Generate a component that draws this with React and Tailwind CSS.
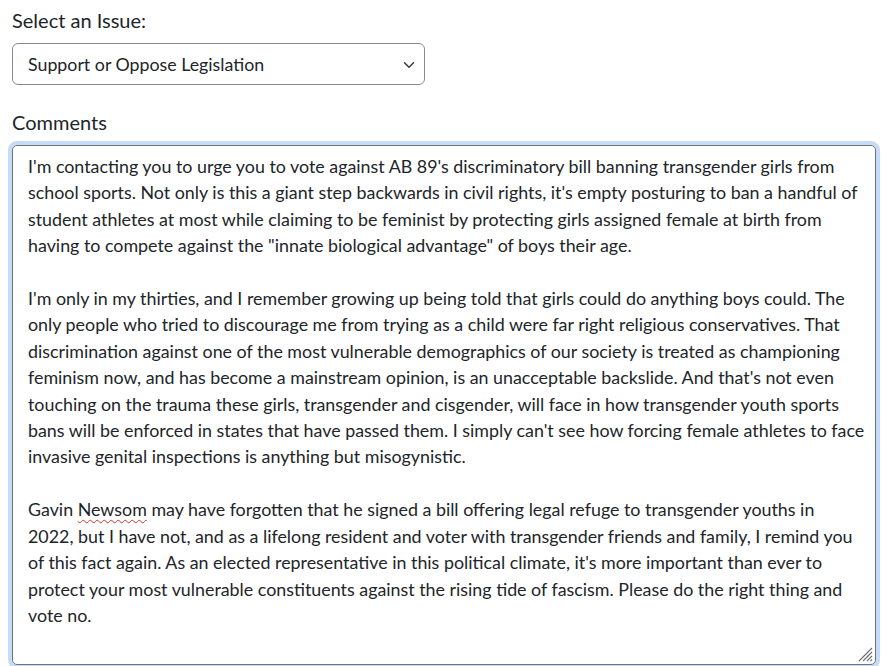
const lines = [
  "I'm contacting you to urge you to vote against AB 89's discriminatory bill banning transgender girls from",
  "school sports. Not only is this a giant step backwards in civil rights, it's empty posturing to ban a handful of",
  "student athletes at most while claiming to be feminist by protecting girls assigned female at birth from",
  'having to compete against the "innate biological advantage" of boys their age.',
  "",
  "I'm only in my thirties, and I remember growing up being told that girls could do anything boys could. The",
  "only people who tried to discourage me from trying as a child were far right religious conservatives. That",
  "discrimination against one of the most vulnerable demographics of our society is treated as championing",
  "feminism now, and has become a mainstream opinion, is an unacceptable backslide. And that's not even",
  "touching on the trauma these girls, transgender and cisgender, will face in how transgender youth sports",
  "bans will be enforced in states that have passed them. I simply can't see how forcing female athletes to face",
  "invasive genital inspections is anything but misogynistic.",
  "",
  "NEWSOM",
  "2022, but I have not, and as a lifelong resident and voter with transgender friends and family, I remind you",
  "of this fact again. As an elected representative in this political climate, it's more important than ever to",
  "protect your most vulnerable constituents against the rising tide of fascism. Please do the right thing and",
  "vote no.",
];

const Squiggle = ({ children }) => (
  <span className="underline decoration-wavy decoration-[#d0342c] decoration-1 underline-offset-[3px]">
    {children}
  </span>
);

export default function App() {
  return (
    <div
      className="min-h-[666px] bg-white pl-[12px] pr-[15px] pt-[5px] text-[#212529]"
      style={{ fontFamily: "Lato, 'Liberation Sans', sans-serif" }}
    >
      <label className="mb-[8px] block text-[20px] leading-[30px]">Select an Issue:</label>
      <div className="relative flex h-[42px] w-[413px] items-center rounded-[6px] border border-[#868b92] pl-[15px] text-[17.8px]">
        <span>Support or Oppose Legislation</span>
        <svg
          className="absolute right-[8px] top-[15px] h-[12px] w-[14px]"
          viewBox="0 0 16 16"
          fill="none"
          stroke="#343a40"
          strokeWidth="2"
          strokeLinecap="round"
          strokeLinejoin="round"
        >
          <path d="m2 5 6 6 6-6" />
        </svg>
      </div>

      <label className="mb-[8px] mt-[22px] block text-[20px] leading-[30px]">Comments</label>
      <div className="relative h-[520px] w-[864px] rounded-[5px] border border-[#6e747b] px-[15px] pt-[7px] text-[17.85px] leading-[26.41px] shadow-[0_0_0_4px_#c5dbf8]">
        {lines.map((line, i) =>
          line === "NEWSOM" ? (
            <div key={i} className="h-[26.41px] whitespace-pre">
              Gavin <Squiggle>Newsom</Squiggle> may have forgotten that he signed a bill offering legal refuge to transgender youths in
            </div>
          ) : (
            <div key={i} className="h-[26.41px] whitespace-pre">
              {line}
            </div>
          )
        )}
        <svg className="absolute bottom-[2px] right-[2px] h-[16px] w-[16px]" viewBox="0 0 16 16" stroke="#6b6f73" strokeWidth="1.1">
          <path d="M15 2 2 15M15 6 6 15M15 10 10 15M15 13.5 13.5 15" />
        </svg>
      </div>
    </div>
  );
}
